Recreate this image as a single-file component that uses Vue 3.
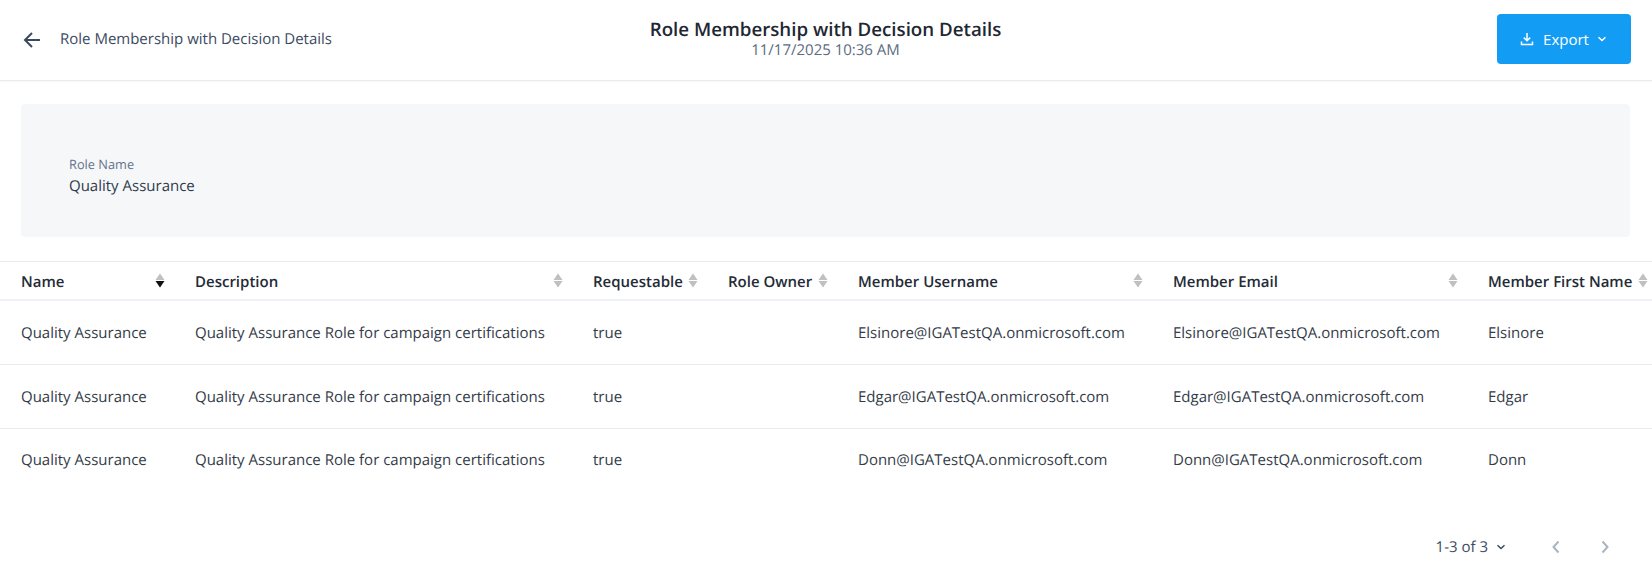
<script setup>
const cols = [
  { label: 'Name', width: 195, active: true },
  { label: 'Description', width: 398 },
  { label: 'Requestable', width: 135 },
  { label: 'Role Owner', width: 130 },
  { label: 'Member Username', width: 315 },
  { label: 'Member Email', width: 315 },
  { label: 'Member First Name', width: 164 }
]
const people = ['Elsinore', 'Edgar', 'Donn']
const rows = people.map((p) => [
  'Quality Assurance',
  'Quality Assurance Role for campaign certifications',
  'true',
  '',
  `${p}@IGATestQA.onmicrosoft.com`,
  `${p}@IGATestQA.onmicrosoft.com`,
  p
])
</script>

<template>
  <div class="page">
    <header class="top">
      <div class="left">
        <svg class="back" width="24" height="24" viewBox="0 0 24 24" fill="none" stroke="#3b4a5f" stroke-width="2">
          <path d="M20 12H5M12 5l-7 7 7 7" />
        </svg>
        <span class="crumb">Role Membership with Decision Details</span>
      </div>
      <div class="center">
        <div class="title">Role Membership with Decision Details</div>
        <div class="date">11/17/2025 10:36 AM</div>
      </div>
      <button class="export">
        <svg class="dl" width="14" height="14" viewBox="0 0 14 14" fill="none" stroke="#fff" stroke-width="1.5">
          <path d="M7 1v7.5M3.8 5.6 7 8.8l3.2-3.2" />
          <path d="M1.5 9.5v3h11v-3" />
        </svg>
        <span>Export</span>
        <svg width="10" height="10" viewBox="0 0 10 10" fill="none" stroke="#fff" stroke-width="1.5">
          <path d="M1.5 3.2 5 6.5l3.5-3.3" />
        </svg>
      </button>
    </header>

    <section class="info">
      <div class="label">Role Name</div>
      <div class="value">Quality Assurance</div>
    </section>

    <div class="table-wrap">
      <table>
        <colgroup>
          <col v-for="c in cols" :key="c.label" :style="{ width: c.width + 'px' }" />
        </colgroup>
        <thead>
          <tr>
            <th v-for="c in cols" :key="c.label">
              <div class="th">
                <span class="th-label">{{ c.label }}</span>
                <svg width="10" height="15" viewBox="0 0 10 15">
                  <path d="M5 0.5 9.5 7h-9z" fill="#c0c0c0" />
                  <path d="M5 14.5 0.5 8h9z" :fill="c.active ? '#111' : '#c0c0c0'" />
                </svg>
              </div>
            </th>
          </tr>
        </thead>
        <tbody>
          <tr v-for="(r, i) in rows" :key="i">
            <td v-for="(v, j) in r" :key="j">{{ v }}</td>
          </tr>
        </tbody>
      </table>
    </div>

    <footer class="pager">
      <span class="count">1-3 of 3</span>
      <svg class="caret" width="10" height="10" viewBox="0 0 10 10" fill="none" stroke="#3b4a5f" stroke-width="1.5">
        <path d="M1.5 3.2 5 6.5l3.5-3.3" />
      </svg>
      <svg class="prev" width="10" height="14" viewBox="0 0 10 14" fill="none" stroke="#a9b4c2" stroke-width="2">
        <path d="M7.5 1.5 2.5 7l5 5.5" />
      </svg>
      <svg class="next" width="10" height="14" viewBox="0 0 10 14" fill="none" stroke="#a9b4c2" stroke-width="2">
        <path d="M2.5 1.5 7.5 7l-5 5.5" />
      </svg>
    </footer>
  </div>
</template>

<style>
html, body { margin: 0; background: #fff; }
</style>

<style scoped>
.page {
  width: 1652px;
  height: 566px;
  overflow: hidden;
  font-family: "Open Sans", "Noto Sans", sans-serif;
  font-size: 15px;
  color: #2f3b4c;
  display: flex;
  flex-direction: column;
  text-rendering: geometricPrecision;
}
.top {
  height: 81px;
  flex: none;
  box-sizing: border-box;
  border-bottom: 1px solid #e9ebee;
  box-shadow: 0 1px 1px rgba(0, 0, 0, 0.03);
  display: grid;
  grid-template-columns: 1fr auto 1fr;
  align-items: center;
  padding: 0 21px 0 20px;
}
.left { display: flex; align-items: center; gap: 16px; margin-bottom: 2px; }
.back { flex: none; margin-top: 2px; }
.crumb { color: #3b4a5f; }
.center { text-align: center; margin-bottom: 4px; }
.title { font-size: 18.72px; font-weight: 600; line-height: 24px; color: #1f2733; }
.date { font-size: 15px; line-height: 16px; color: #5b6b80; }
.export {
  justify-self: end;
  width: 134px;
  height: 50px;
  margin-bottom: 2px;
  border: 0;
  border-radius: 4px;
  background: #139cf4;
  color: #fff;
  font: inherit;
  font-size: 15px;
  display: flex;
  align-items: center;
  justify-content: center;
  gap: 8px;
  padding: 0;
}
.dl { margin-right: 1px; margin-left: -1px; }
.info {
  margin: 23px 22px 0 21px;
  height: 133px;
  flex: none;
  box-sizing: border-box;
  background: #f6f7f9;
  border-radius: 4px;
  padding: 52px 48px 0;
}
.label { font-size: 12.8px; line-height: 16px; color: #64748b; }
.value { font-size: 15px; line-height: 28px; color: #2f3b4c; }
.table-wrap { margin-top: 24px; overflow: hidden; flex: none; }
table {
  table-layout: fixed;
  border-collapse: separate;
  border-spacing: 0;
  width: 1652px;
  font-size: 15px;
}
th {
  height: 40px;
  box-sizing: border-box;
  padding: 0 0 0 21px;
  border-top: 1px solid #e8ecf1;
  border-bottom: 2px solid #eef1f5;
  text-align: left;
  font-weight: 600;
  color: #242b36;
}
th + th { padding-left: 0; }
.th { display: flex; align-items: center; justify-content: space-between; padding-right: 30px; white-space: nowrap; }
.th svg { flex: none; }
.th-label { padding-top: 2px; }
th:last-child .th { padding-right: 4px; }
td {
  height: 64px;
  box-sizing: border-box;
  padding: 0;
  border-bottom: 1px solid #e8ecf1;
  color: #333b47;
  white-space: nowrap;
}
td:first-child { padding-left: 21px; }
tbody tr:last-child td { border-bottom-color: transparent; padding-bottom: 2px; }
.pager {
  margin-top: auto;
  height: 38px;
  flex: none;
  display: flex;
  align-items: center;
  justify-content: flex-end;
  padding: 0 42px 0 0;
  color: #3b4a5f;
}
.caret { margin-left: 8px; }
.prev { margin-left: 45px; }
.next { margin-left: 39px; }
</style>
